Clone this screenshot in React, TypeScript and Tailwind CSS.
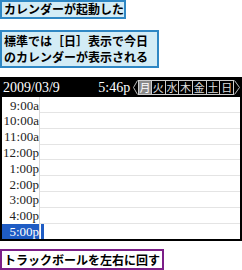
import React from "react";

const times = [
  "9:00a",
  "10:00a",
  "11:00a",
  "12:00p",
  "1:00p",
  "2:00p",
  "3:00p",
  "4:00p",
  "5:00p",
];

const days = ["月", "火", "水", "木", "金", "土", "日"];

const jp = { fontFamily: '"Noto Sans CJK JP", "Noto Sans", sans-serif' };
const serif = { fontFamily: '"Liberation Serif", "DejaVu Serif", serif' };

const App = () => {
  return (
    <div className="w-[242px] h-[270px] bg-white flex flex-col overflow-hidden" style={jp}>
      <div className="w-[126px] h-[19px] bg-[#d3ecf6] border-2 border-[#2f87c4] flex items-center pl-[2px] text-[12px] font-bold leading-none text-black">
        カレンダーが起動した
      </div>
      <div className="mt-[11px] w-[159px] h-[39px] bg-[#d3ecf6] border-2 border-[#2f87c4] flex flex-col justify-center pl-[2px] text-[12px] font-bold leading-[16px] text-black">
        <div>標準では［日］表示で今日</div>
        <div>のカレンダーが表示される</div>
      </div>

      <div className="mt-[9px] w-[242px] bg-black flex flex-col">
        <div className="h-[20px] flex items-center text-white text-[14px]" style={serif}>
          <span className="pl-[3px]">2009/03/9</span>
          <span className="ml-auto mr-[3px]">5:46p</span>
          <div className="mr-[2px] flex items-center h-[15px]">
            <svg width="5" height="15" viewBox="0 0 5 15" className="block">
              <path d="M4.5 0.5 L0.5 7.5 L4.5 14.5" stroke="#bbb" fill="none" />
            </svg>
            {days.map((d, i) => (
              <div
                key={d}
                className={
                  i === 0
                    ? "w-[13.7px] h-[15px] border border-[#ccc] bg-[#8a8a8a] flex items-center justify-center text-[11px] text-white leading-none"
                    : "w-[13.7px] h-[15px] border-t border-b border-r border-[#ccc] flex items-center justify-center text-[11px] text-[#ddd] leading-none"
                }
                style={jp}
              >
                {d}
              </div>
            ))}
            <svg width="6" height="15" viewBox="0 0 6 15" className="block">
              <path d="M0.5 0.5 L5.5 7.5 L0.5 14.5" stroke="#bbb" fill="none" />
            </svg>
          </div>
        </div>
        <div className="mx-[2px] mb-[2px] bg-white flex flex-col">
          {times.map((t, i) => {
            const last = i === times.length - 1;
            return (
              <div key={t} className="h-[15.8px] flex">
                <div
                  className={
                    last
                      ? "w-[37px] flex items-center justify-end bg-[#1f5cc4] text-white text-[13px] leading-none"
                      : "w-[37px] flex items-center justify-end text-[#222] text-[13px] leading-none"
                  }
                  style={serif}
                >
                  {t}
                </div>
                <div className="w-[1px] bg-[#d8d8d8]" />
                <div
                  className={
                    last
                      ? "flex-1 flex"
                      : "flex-1 border-b border-[#e4e4e4]"
                  }
                >
                  {last && <div className="ml-[1px] w-[3px] bg-[#1f5cc4]" />}
                </div>
              </div>
            );
          })}
        </div>
      </div>

      <div className="mt-[8px] w-[164px] h-[21px] border-2 border-[#7c1f88] bg-white flex items-center pl-[2px] text-[12px] font-bold leading-none text-black">
        トラックボールを左右に回す
      </div>
    </div>
  );
};

export default App;
